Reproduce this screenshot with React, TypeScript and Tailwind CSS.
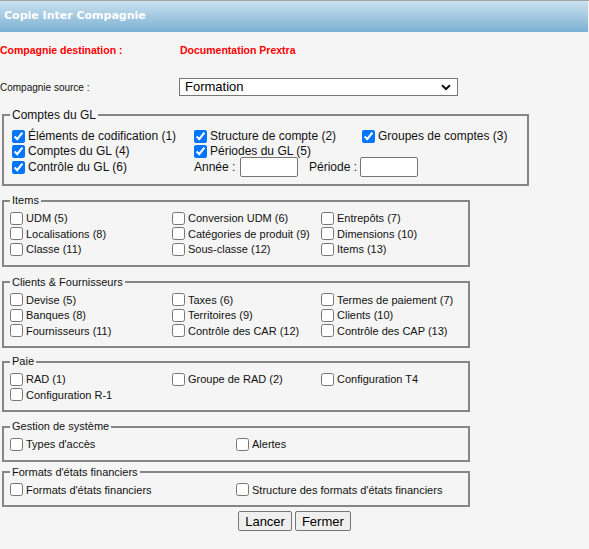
import React from 'react';

const tahoma = "font-['Tahoma','Liberation_Sans',sans-serif]";

type Opt = { label: string; checked?: boolean };

const Check: React.FC<Opt> = ({ label, checked }) => (
  <label className="flex h-full items-center whitespace-nowrap">
    <input
      type="checkbox"
      defaultChecked={checked}
      className="m-0 h-[13px] w-[13px] shrink-0 accent-[#0075ff]"
    />
    <span className="ml-[3px]">{label}</span>
  </label>
);

const Section: React.FC<{ title: string; width: string; className?: string; children: React.ReactNode }> = ({
  title,
  width,
  className,
  children,
}) => (
  <fieldset className={`ml-[2px] border-2 border-[#868686] ${width} ${className ?? ''}`}>
    <legend className="ml-[6px] px-[2px] text-[11px] leading-[13px] text-[#111]">{title}</legend>
    {children}
  </fieldset>
);

const Grid3: React.FC<{ rows: Opt[][] }> = ({ rows }) => (
  <div className="pb-[8px] pl-[6px] pt-[3px] text-[11px] text-[#111]">
    {rows.map((row, i) => (
      <div key={i} className="grid h-[15.5px] grid-cols-[162px_149px_auto]">
        {row.map((o, j) => (
          <div key={j}>{o.label ? <Check {...o} /> : null}</div>
        ))}
      </div>
    ))}
  </div>
);

const Grid2: React.FC<{ items: Opt[] }> = ({ items }) => (
  <div className="grid h-[15.5px] grid-cols-[226px_auto] pl-[6px] text-[11px] text-[#111]">
    {items.map((o, j) => (
      <div key={j}>
        <Check {...o} />
      </div>
    ))}
  </div>
);

export default function App() {
  return (
    <div className={`min-h-[549px] w-[589px] bg-[#f5f5f5] ${tahoma}`}>
      <div className="border-t border-[#a3a3a3]">
        <div className="flex h-[31px] w-[588px] items-center bg-gradient-to-b from-[#cbe2ef] to-[#7bb0d3] pl-[4px]">
          <span className="font-['DejaVu_Sans',sans-serif] text-[11px] font-bold text-white">Copie Inter Compagnie</span>
        </div>
      </div>

      <div className="mt-[13px] flex h-[12px] items-center text-[10.5px] font-bold text-[#ff0000]">
        <span className="w-[180px]">Compagnie destination :</span>
        <span>Documentation Prextra</span>
      </div>

      <div className="mt-[21px] flex h-[18px] items-center text-[10px] text-[#111]">
        <span className="w-[179px]">Compagnie source :</span>
        <div className="relative">
          <select className="h-[18px] w-[279px] appearance-none border border-[#767676] bg-white pl-[5px] font-['Liberation_Sans',sans-serif] text-[13px] leading-[16px] text-black">
            <option>Formation</option>
          </select>
          <svg
            className="pointer-events-none absolute right-[7px] top-[6px]"
            width="10"
            height="7"
            viewBox="0 0 10 7"
          >
            <path d="M1 1.2 L5 5 L9 1.2" fill="none" stroke="#111" strokeWidth="2" />
          </svg>
        </div>
      </div>

      <fieldset className="ml-[2px] mt-[12px] w-[527px] border-2 border-[#868686]">
        <legend className="ml-[6px] px-[2px] text-[12px] leading-[14px] text-[#111]">Comptes du GL</legend>
        <div className="pb-[7px] pl-[8px] pt-[5px] text-[12px] text-[#111]">
          <div className="grid h-[15px] grid-cols-[182px_168px_auto]">
            <Check label="Éléments de codification (1)" checked />
            <Check label="Structure de compte (2)" checked />
            <Check label="Groupes de comptes (3)" checked />
          </div>
          <div className="grid h-[15px] grid-cols-[182px_168px_auto]">
            <Check label="Comptes du GL (4)" checked />
            <Check label="Périodes du GL (5)" checked />
          </div>
          <div className="grid h-[20px] grid-cols-[182px_auto]">
            <Check label="Contrôle du GL (6)" checked />
            <div className="flex items-center">
              <span className="w-[46px] whitespace-nowrap">Année :</span>
              <input className="h-[20px] w-[58px] rounded-[2px] border border-[#767676] bg-white" />
              <span className="ml-[11px] w-[51px] whitespace-nowrap">Période :</span>
              <input className="h-[20px] w-[58px] rounded-[2px] border border-[#767676] bg-white" />
            </div>
          </div>
        </div>
      </fieldset>

      <Section title="Items" width="w-[468px]" className="mt-[8px]">
        <Grid3
          rows={[
            [{ label: 'UDM (5)' }, { label: 'Conversion UDM (6)' }, { label: 'Entrepôts (7)' }],
            [{ label: 'Localisations (8)' }, { label: 'Catégories de produit (9)' }, { label: 'Dimensions (10)' }],
            [{ label: 'Classe (11)' }, { label: 'Sous-classe (12)' }, { label: 'Items (13)' }],
          ]}
        />
      </Section>

      <Section title="Clients & Fournisseurs" width="w-[468px]" className="mt-[9px]">
        <Grid3
          rows={[
            [{ label: 'Devise (5)' }, { label: 'Taxes (6)' }, { label: 'Termes de paiement (7)' }],
            [{ label: 'Banques (8)' }, { label: 'Territoires (9)' }, { label: 'Clients (10)' }],
            [{ label: 'Fournisseurs (11)' }, { label: 'Contrôle des CAR (12)' }, { label: 'Contrôle des CAP (13)' }],
          ]}
        />
      </Section>

      <Section title="Paie" width="w-[468px]" className="mt-[7px]">
        <Grid3
          rows={[
            [{ label: 'RAD (1)' }, { label: 'Groupe de RAD (2)' }, { label: 'Configuration T4' }],
            [{ label: 'Configuration R-1' }, { label: '' }, { label: '' }],
          ]}
        />
      </Section>

      <Section title="Gestion de système" width="w-[468px]" className="mt-[8px]">
        <div className="pb-[8px] pt-[3px]">
          <Grid2 items={[{ label: "Types d'accès" }, { label: 'Alertes' }]} />
        </div>
      </Section>

      <Section title="Formats d'états financiers" width="w-[468px]" className="mt-[4px]">
        <div className="pb-[8px] pt-[3px]">
          <Grid2 items={[{ label: "Formats d'états financiers" }, { label: "Structure des formats d'états financiers" }]} />
        </div>
      </Section>

      <div className="mt-[4px] flex justify-center gap-[3px] font-['Liberation_Sans',sans-serif] text-[13px] text-black">
        <button className="h-[20px] rounded-[2px] border border-[#767676] bg-[#efefef] px-[6px]">Lancer</button>
        <button className="h-[20px] rounded-[2px] border border-[#767676] bg-[#efefef] px-[6px]">Fermer</button>
      </div>
    </div>
  );
}
